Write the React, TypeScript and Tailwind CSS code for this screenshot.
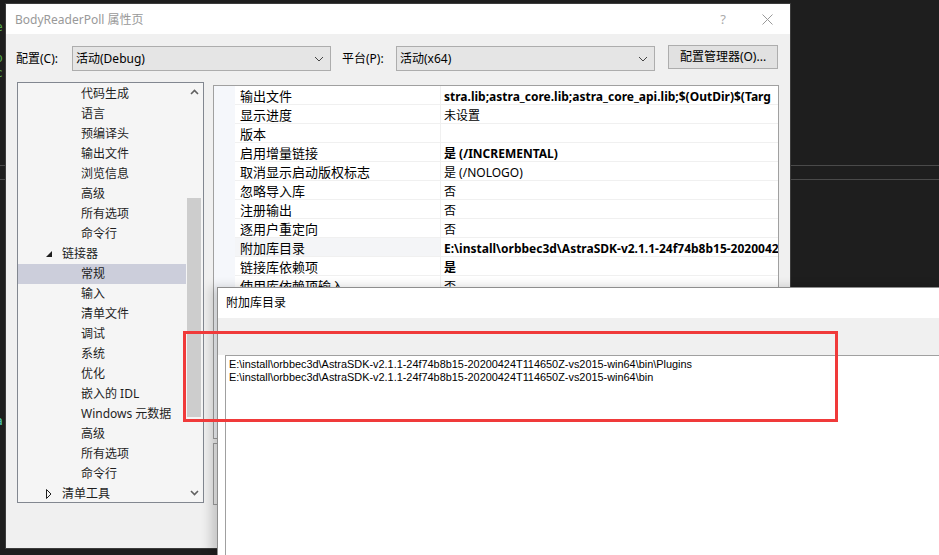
import React from "react";

const ui = "font-['Noto_Sans','Noto_Sans_CJK_SC',sans-serif]";

type TreeItem = {
  label: string;
  level: 1 | 2;
  expanded?: boolean;
  selected?: boolean;
};

const treeItems: TreeItem[] = [
  { label: "代码生成", level: 2 },
  { label: "语言", level: 2 },
  { label: "预编译头", level: 2 },
  { label: "输出文件", level: 2 },
  { label: "浏览信息", level: 2 },
  { label: "高级", level: 2 },
  { label: "所有选项", level: 2 },
  { label: "命令行", level: 2 },
  { label: "链接器", level: 1, expanded: true },
  { label: "常规", level: 2, selected: true },
  { label: "输入", level: 2 },
  { label: "清单文件", level: 2 },
  { label: "调试", level: 2 },
  { label: "系统", level: 2 },
  { label: "优化", level: 2 },
  { label: "嵌入的 IDL", level: 2 },
  { label: "Windows 元数据", level: 2 },
  { label: "高级", level: 2 },
  { label: "所有选项", level: 2 },
  { label: "命令行", level: 2 },
  { label: "清单工具", level: 1, expanded: false },
];

const props: { name: string; value: string; bold?: boolean; active?: boolean }[] = [
  { name: "输出文件", value: "stra.lib;astra_core.lib;astra_core_api.lib;$(OutDir)$(Targ", bold: true },
  { name: "显示进度", value: "未设置" },
  { name: "版本", value: "" },
  { name: "启用增量链接", value: "是 (/INCREMENTAL)", bold: true },
  { name: "取消显示启动版权标志", value: "是 (/NOLOGO)" },
  { name: "忽略导入库", value: "否" },
  { name: "注册输出", value: "否" },
  { name: "逐用户重定向", value: "否" },
  {
    name: "附加库目录",
    value: "E:\\install\\orbbec3d\\AstraSDK-v2.1.1-24f74b8b15-20200424T114650Z-vs2015-win64\\bin\\Plugins;",
    bold: true,
    active: true,
  },
  { name: "链接库依赖项", value: "是", bold: true },
  { name: "使用库依赖项输入", value: "否" },
  { name: "链接状态", value: "" },
  { name: "阻止 Dll 绑定", value: "" },
  { name: "将链接器警告视为错误", value: "" },
  { name: "强制文件输出", value: "" },
  { name: "创建可热修补映像", value: "" },
  { name: "指定节特性", value: "" },
];

const Chevron = ({ up = false }: { up?: boolean }) => (
  <svg width="9" height="6" viewBox="0 0 9 6">
    <polyline
      points={up ? "1,5 4.5,1.5 8,5" : "1,1 4.5,4.5 8,1"}
      fill="none"
      stroke="#606060"
      strokeWidth="1.6"
    />
  </svg>
);

const Select = ({ text }: { text: string }) => (
  <div className="mt-px flex h-[25px] w-[259px] items-center justify-between border border-[#adadad] bg-[#e5e5e5] pl-[3px] pr-[6px] text-[12px] text-black">
    <span>{text}</span>
    <svg width="10" height="6" viewBox="0 0 10 6">
      <polyline points="1,1 5,5 9,1" fill="none" stroke="#444" strokeWidth="1" />
    </svg>
  </div>
);

const Tree = () => (
  <div className="flex h-[421px] w-[187px] border border-[#828790] bg-[#f5f5f5]">
    <div className="flex flex-1 flex-col overflow-hidden pt-px">
      {treeItems.map((item, i) => (
        <div
          key={i}
          className={`flex h-[20px] shrink-0 items-center text-[12px] text-[#1e1e1e] ${
            item.selected ? "bg-[#cccedb]" : ""
          } ${item.level === 1 ? "pl-[28px]" : "pl-[63px]"}`}
        >
          {item.level === 1 && (
            <span className="flex w-[16px] items-center">
              {item.expanded ? (
                <svg width="7" height="7" viewBox="0 0 7 7">
                  <polygon points="6,0 6,6 0,6" fill="#1e1e1e" />
                </svg>
              ) : (
                <svg width="6" height="10" viewBox="0 0 6 10">
                  <polygon points="0.5,0.5 5,5 0.5,9.5" fill="none" stroke="#1e1e1e" strokeWidth="1" />
                </svg>
              )}
            </span>
          )}
          <span className="whitespace-nowrap">{item.label}</span>
        </div>
      ))}
    </div>
    <div className="flex w-[17px] flex-col">
      <div className="flex h-[18px] items-center justify-center">
        <Chevron up />
      </div>
      <div className="flex flex-1 flex-col pl-px pt-[97px]">
        <div className="h-[219px] w-[14px] bg-[#cdcdcd]" />
      </div>
      <div className="flex h-[18px] items-center justify-center">
        <Chevron />
      </div>
    </div>
  </div>
);

const PropertyGrid = () => (
  <div className="flex h-[354px] w-[566px] overflow-hidden border border-[#a0a0a0] bg-white">
    <div className="w-[21px] shrink-0 bg-[#f5f7fb]" />
    <div className="flex flex-1 flex-col">
      {props.map((p, i) => (
        <div key={i} className="flex h-[19px] shrink-0 border-b border-[#f0f0f0]">
          <div
            className={`flex w-[206px] shrink-0 items-center border-r border-[#f0f0f0] pl-[5px] text-[13px] text-black ${
              p.active ? "bg-[#f4f5f7]" : ""
            }`}
          >
            <span className="translate-y-[2px] whitespace-nowrap">{p.name}</span>
          </div>
          <div
            className={`flex min-w-0 flex-1 items-center overflow-hidden pl-[3px] text-[12px] text-black ${
              p.bold ? "font-bold" : ""
            }`}
          >
            <span className="translate-y-[2px] whitespace-nowrap">{p.value}</span>
          </div>
        </div>
      ))}
    </div>
  </div>
);

const MainDialog = () => (
  <div className={`absolute left-[5px] top-[3px] flex h-[546px] w-[786px] flex-col border border-[#3c3c3c] ${ui}`}>
    <div className="flex h-[30px] shrink-0 items-center bg-white pl-[9px] pt-px text-[12px] text-[#999999]">
      <span className="flex-1">BodyReaderPoll 属性页</span>
      <span className="mr-[36px] text-[13px] text-[#aaaaaa]">?</span>
      <svg className="mr-[17px]" width="11" height="11" viewBox="0 0 11 11">
        <path d="M0.5 0.5 L10.5 10.5 M10.5 0.5 L0.5 10.5" stroke="#999" strokeWidth="1" />
      </svg>
    </div>
    <div className="flex flex-1 flex-col bg-[#f0f0f0]">
      <div className="flex items-start pl-[10px] pt-[11px] text-[12px] text-black">
        <span className="mt-[5px] w-[56px]">配置(C):</span>
        <Select text="活动(Debug)" />
        <span className="ml-[11px] mt-[5px] w-[54px]">平台(P):</span>
        <Select text="活动(x64)" />
        <div className="ml-[13px] flex h-[24px] w-[110px] items-center justify-center border border-[#adadad] bg-[#e1e1e1]">
          配置管理器(O)...
        </div>
      </div>
      <div className="mt-[11px] flex pl-[11px]">
        <Tree />
        <div className="ml-[9px] mt-[3px] flex flex-col">
          <PropertyGrid />
          <div className="mt-[4px] h-[62px] w-[566px] border border-[#a0a0a0] bg-[#f0f0f0]" />
        </div>
      </div>
    </div>
  </div>
);

const LibDirDialog = () => (
  <div className={`absolute bottom-0 left-[217px] right-0 top-[287px] flex flex-col border-l border-t border-[#8e8e8e] bg-white shadow-[-6px_0_10px_rgba(0,0,0,0.18)] ${ui}`}>
    <div className="flex h-[30px] shrink-0 items-center pl-[8px] text-[12px] text-black">附加库目录</div>
    <div className="h-[37px] shrink-0 bg-[#f0f0f0]" />
    <div className="flex flex-1 pl-[7px]">
      <div className="flex-1 border-l border-t border-[#a0a0a0] pl-[3px] pt-[2px] font-['Liberation_Sans',Arial,sans-serif] text-[10.9px] leading-[13px] text-black">
        <div className="whitespace-nowrap">E:\install\orbbec3d\AstraSDK-v2.1.1-24f74b8b15-20200424T114650Z-vs2015-win64\bin\Plugins</div>
        <div className="whitespace-nowrap">E:\install\orbbec3d\AstraSDK-v2.1.1-24f74b8b15-20200424T114650Z-vs2015-win64\bin</div>
      </div>
    </div>
  </div>
);

export default function App() {
  return (
    <div className="relative h-[555px] w-[939px] overflow-hidden bg-[#1e1e1e]">
      {/* editor behind the dialogs */}
      <div className="flex flex-col pt-[165px]">
        <div className="h-px bg-[#4a4a4a]" />
        <div className="mt-[13px] h-px bg-[#4a4a4a]" />
      </div>
      <div className="absolute left-[-5px] top-0 font-['DejaVu_Sans_Mono',monospace] text-[13px] leading-[15px]">
        <div className="mt-[19px] text-[#57a64a]">e</div>
        <div className="mt-[16px] text-[#57a64a]">p</div>
        <div className="text-[#57a64a]">c</div>
        <div className="mt-[333px] text-[#4ec9b0]">a</div>
      </div>
      <MainDialog />
      <LibDirDialog />
      <div className="absolute left-[183px] top-[331px] h-[91px] w-[655px] border-[3px] border-[#f03a3a]" />
    </div>
  );
}
